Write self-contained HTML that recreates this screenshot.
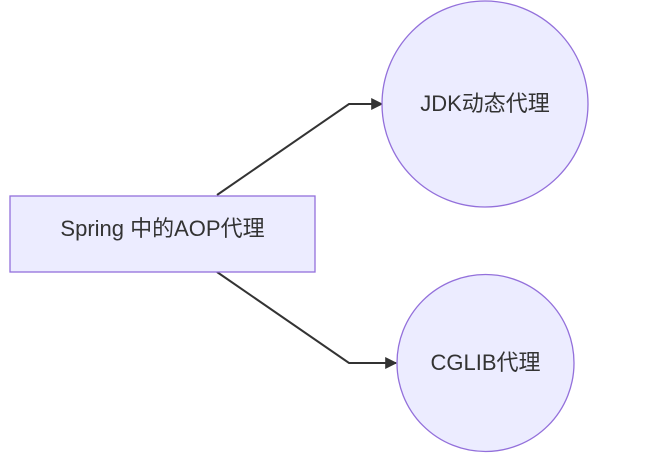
<!DOCTYPE html>
<html><head><meta charset="utf-8"><style>
html,body{margin:0;padding:0;background:#fff;}
svg{display:block;}
text{font-family:"Liberation Sans","Noto Sans CJK SC",sans-serif;font-size:22px;fill:#333;}
</style></head><body>
<svg width="660" height="458" viewBox="0 0 660 458" xmlns="http://www.w3.org/2000/svg">
<defs><marker id="a" viewBox="0 0 10 10" refX="9" refY="5" markerWidth="12" markerHeight="12" markerUnits="userSpaceOnUse" orient="auto"><path d="M0,0L10,5L0,10z" fill="#333"/></marker></defs>
<path d="M217,195 L349,104 L382,104" fill="none" stroke="#333" stroke-width="2" marker-end="url(#a)"/>
<path d="M217,272 L349,363 L396,363" fill="none" stroke="#333" stroke-width="2" marker-end="url(#a)"/>
<rect x="10" y="196" width="305" height="76" fill="#ECECFF" stroke="#9370DB" stroke-width="1.3"/>
<text x="162.5" y="236" text-anchor="middle">Spring 中的AOP代理</text>
<circle cx="485" cy="104" r="103" fill="#ECECFF" stroke="#9370DB" stroke-width="1.3"/>
<text x="485" y="111" text-anchor="middle">JDK动态代理</text>
<circle cx="485.5" cy="363" r="88.5" fill="#ECECFF" stroke="#9370DB" stroke-width="1.3"/>
<text x="485.5" y="370" text-anchor="middle">CGLIB代理</text>
</svg>
</body></html>
